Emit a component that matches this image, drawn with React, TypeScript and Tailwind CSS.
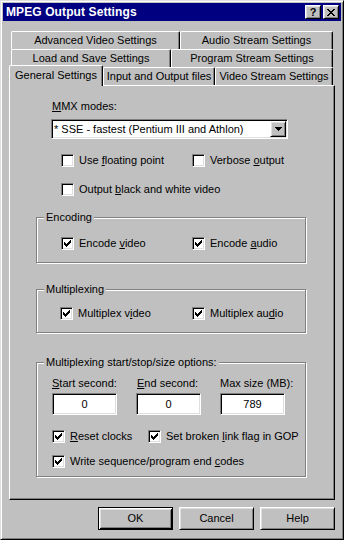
// Win98-style "MPEG Output Settings" property sheet

const raised =
  "border border-t-white border-l-white border-r-black border-b-black shadow-[inset_1px_1px_#dfdfdf,inset_-1px_-1px_#808080]"
const sunken =
  "border border-t-[#808080] border-l-[#808080] border-r-white border-b-white shadow-[inset_1px_1px_#000,inset_-1px_-1px_#dfdfdf]"
const tab =
  "flex h-[18px] items-center justify-center whitespace-nowrap rounded-t-[2px] border-t border-l border-r border-t-white border-l-white border-r-black bg-[#c0c0c0] shadow-[inset_-1px_0_#808080]"
const group =
  "ml-[26px] w-[270px] border border-[#808080] px-0 shadow-[inset_1px_1px_#fff,1px_1px_#fff]"
const legend = "ml-[7px] bg-[#c0c0c0] px-[2px] leading-[13px]"

function CheckMark() {
  // 7x7 pixel tick
  const px: [number, number, number][] = [
    [6, 0, 1],
    [5, 1, 2],
    [0, 2, 1],
    [4, 2, 3],
    [0, 3, 2],
    [3, 3, 3],
    [0, 4, 5],
    [1, 5, 3],
    [2, 6, 1],
  ]
  return (
    <svg width="7" height="7" viewBox="0 0 7 7" shapeRendering="crispEdges">
      {px.map(([x, y, w], i) => (
        <rect key={i} x={x} y={y} width={w} height={1} fill="#000" />
      ))}
    </svg>
  )
}

function Check({ checked, label, w }: { checked?: boolean; label: React.ReactNode; w?: string }) {
  return (
    <div className={`flex h-[13px] items-center gap-[5px] ${w ?? ""}`}>
      <span className={`flex size-[13px] shrink-0 items-center justify-center bg-white ${sunken}`}>
        {checked && <CheckMark />}
      </span>
      <span className="whitespace-nowrap leading-[13px]">{label}</span>
    </div>
  )
}

function Button({ label, primary }: { label: string; primary?: boolean }) {
  return (
    <div
      className={`flex h-[23px] w-[75px] items-center justify-center bg-[#c0c0c0] ${
        primary
          ? "border border-black shadow-[inset_1px_1px_#fff,inset_-1px_-1px_#000,inset_2px_2px_#dfdfdf,inset_-2px_-2px_#808080]"
          : raised
      }`}
    >
      {label}
    </div>
  )
}

export default function App() {
  return (
    <div className="flex h-[540px] w-[344px] flex-col border border-t-[#dfdfdf] border-l-[#dfdfdf] border-r-black border-b-black bg-[#c0c0c0] p-[2px] font-['Liberation_Sans',Arial,sans-serif] text-[11px] leading-[13px] text-black shadow-[inset_1px_1px_#fff,inset_-1px_-1px_#808080]">
      {/* title bar */}
      <div className="flex h-[18px] shrink-0 items-center bg-[#000080] pl-[3px] pr-[2px]">
        <span className="flex-1 text-[12px] font-bold tracking-[0.1px] text-white">MPEG Output Settings</span>
        <div className="flex gap-[2px]">
          <span className={`flex h-[14px] w-[16px] items-center justify-center bg-[#c0c0c0] text-[11px] font-bold leading-none ${raised}`}>
            ?
          </span>
          <span className={`flex h-[14px] w-[16px] items-center justify-center bg-[#c0c0c0] ${raised}`}>
            <svg width="8" height="7" viewBox="0 0 8 7" shapeRendering="crispEdges">
              {[
                [0, 0, 2], [6, 0, 2],
                [1, 1, 2], [5, 1, 2],
                [2, 2, 4],
                [3, 3, 2],
                [2, 4, 4],
                [1, 5, 2], [5, 5, 2],
                [0, 6, 2], [6, 6, 2],
              ].map(([x, y, w], i) => (
                <rect key={i} x={x} y={y} width={w} height={1} fill="#000" />
              ))}
            </svg>
          </span>
        </div>
      </div>

      {/* tab rows */}
      <div className="ml-[8px] mt-[10px] flex">
        <div className={`${tab} w-[169px]`}>Advanced Video Settings</div>
        <div className={`${tab} w-[153px]`}>Audio Stream Settings</div>
      </div>
      <div className="ml-[8px] flex">
        <div className={`${tab} w-[160px]`}>Load and Save Settings</div>
        <div className={`${tab} w-[162px]`}>Program Stream Settings</div>
      </div>
      <div className="ml-[8px] flex h-[18px] items-start">
        <div className={`${tab} relative z-10 -ml-[2px] -mt-[2px] h-[21px] w-[94px] pb-[2px]`}>General Settings</div>
        <div className={`${tab} w-[112px]`}>Input and Output files</div>
        <div className={`${tab} w-[118px]`}>Video Stream Settings</div>
      </div>

      {/* panel */}
      <div className="ml-[6px] flex h-[415px] w-[326px] flex-col border border-t-white border-l-white border-r-black border-b-black shadow-[inset_-1px_-1px_#808080]">
        <div className="ml-[42px] mt-[14px] h-[13px]">
          <u>M</u>MX modes:
        </div>
        <div className={`ml-[41px] mt-[6px] flex h-[20px] w-[237px] items-center bg-white ${sunken}`}>
          <span className="flex-1 whitespace-nowrap pl-[2px]">* SSE - fastest (Pentium III and Athlon)</span>
          <span className={`mr-[1px] flex h-[16px] w-[16px] items-center justify-center bg-[#c0c0c0] ${raised}`}>
            <svg width="7" height="4" viewBox="0 0 7 4" shapeRendering="crispEdges">
              <rect x="0" y="0" width="7" height="1" />
              <rect x="1" y="1" width="5" height="1" />
              <rect x="2" y="2" width="3" height="1" />
              <rect x="3" y="3" width="1" height="1" />
            </svg>
          </span>
        </div>

        <div className="ml-[51px] mt-[15px] flex">
          <Check w="w-[131px]" label={<>Use <u>f</u>loating point</>} />
          <Check label={<>Verbose <u>o</u>utput</>} />
        </div>
        <div className="ml-[51px] mt-[16px] flex">
          <Check label={<>Output <u>b</u>lack and white video</>} />
        </div>

        {/* Encoding */}
        <fieldset className={`${group} mt-[15px] pb-[12px]`}>
          <legend className={legend}>Encoding</legend>
          <div className="ml-[24px] mt-[13px] flex">
            <Check checked w="w-[131px]" label={<>Encode <u>v</u>ideo</>} />
            <Check checked label={<>Encode <u>a</u>udio</>} />
          </div>
        </fieldset>

        {/* Multiplexing */}
        <fieldset className={`${group} mt-[20px] pb-[12px]`}>
          <legend className={legend}>Multiplexing</legend>
          <div className="ml-[23px] mt-[11px] flex">
            <Check checked w="w-[132px]" label={<>Multiplex v<u>i</u>deo</>} />
            <Check checked label={<>Multiplex au<u>d</u>io</>} />
          </div>
        </fieldset>

        {/* start / stop / size */}
        <fieldset className={`${group} mt-[23px] pb-[8px]`}>
          <legend className={legend}>Multiplexing start/stop/size options:</legend>
          <div className="ml-[15px] mt-[8px] grid grid-cols-[84px_84px_84px]">
            <span>
              <u>S</u>tart second:
            </span>
            <span className="pl-[1px]">
              <u>E</u>nd second:
            </span>
            <span>Max size (MB):</span>
          </div>
          <div className="ml-[15px] mt-[3px] grid grid-cols-[84px_84px_84px]">
            {["0", "0", "789"].map((v, i) => (
              <div key={i} className={`flex h-[22px] w-[65px] items-center justify-center bg-white ${sunken}`}>
                {v}
              </div>
            ))}
          </div>
          <div className="ml-[15px] mt-[15px] flex">
            <Check checked w="w-[96px]" label={<><u>R</u>eset clocks</>} />
            <Check checked label={<>Set broken <u>l</u>ink flag in GOP</>} />
          </div>
          <div className="ml-[15px] mt-[12px] flex">
            <Check checked label={<>Write sequence/program end <u>c</u>odes</>} />
          </div>
        </fieldset>
      </div>

      {/* buttons */}
      <div className="mt-[7px] flex justify-end gap-[6px] pr-[6px]">
        <Button label="OK" primary />
        <Button label="Cancel" />
        <Button label="Help" />
      </div>
    </div>
  )
}
